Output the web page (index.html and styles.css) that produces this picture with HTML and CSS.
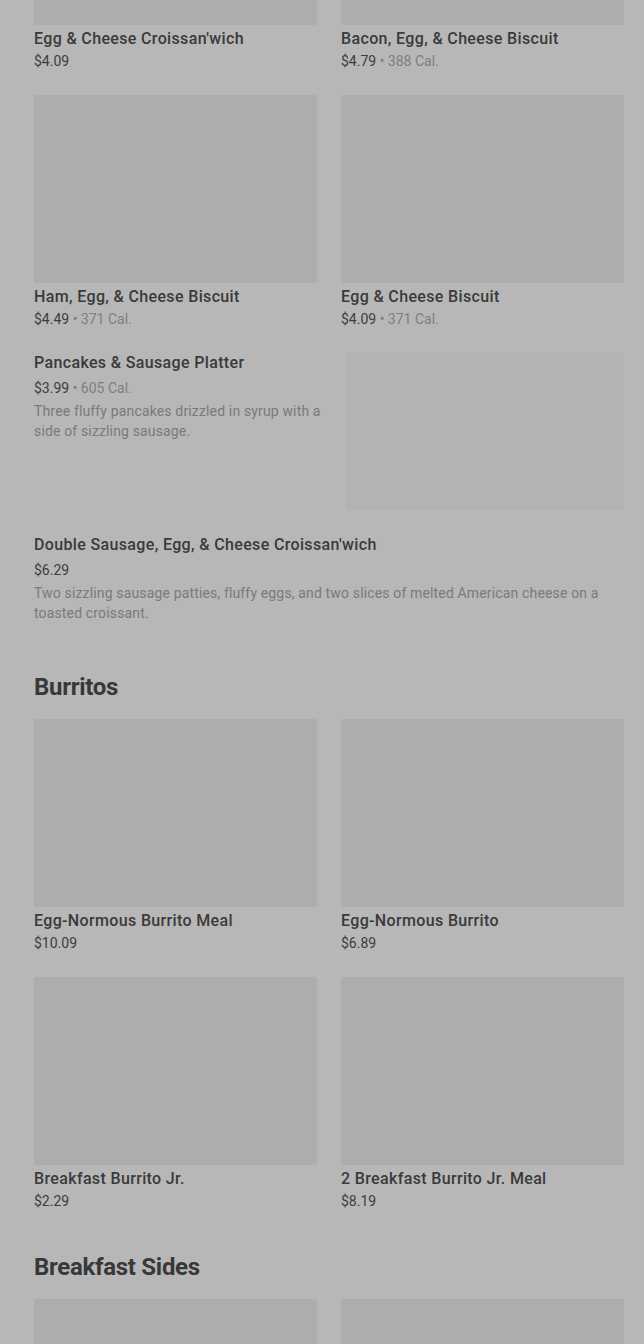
FILE: index.html
```html
<!DOCTYPE html>
<html lang="en">

<head>
  <meta charset="UTF-8">
  <meta name="viewport" content="width=device-width, initial-scale=1.0">
  <title>Breakfast menu</title>
  <link rel="stylesheet" href="styles.css">
</head>

<body>
  <main class="menu">
    <section class="section">
      <div class="grid">
        <div class="item">
          <div class="thumb"></div>
          <h3 class="name">Egg &amp; Cheese Croissan'wich</h3>
          <p class="price">$4.09</p>
        </div>
        <div class="item">
          <div class="thumb"></div>
          <h3 class="name">Bacon, Egg, &amp; Cheese Biscuit</h3>
          <p class="price">$4.79 <span class="cal">• 388 Cal.</span></p>
        </div>
        <div class="item">
          <div class="thumb"></div>
          <h3 class="name">Ham, Egg, &amp; Cheese Biscuit</h3>
          <p class="price">$4.49 <span class="cal">• 371 Cal.</span></p>
        </div>
        <div class="item">
          <div class="thumb"></div>
          <h3 class="name">Egg &amp; Cheese Biscuit</h3>
          <p class="price">$4.09 <span class="cal">• 371 Cal.</span></p>
        </div>
      </div>

      <div class="list">
        <div class="row">
          <div class="info">
            <h3 class="name">Pancakes &amp; Sausage Platter</h3>
            <p class="price">$3.99 <span class="cal">• 605 Cal.</span></p>
            <p class="desc">Three fluffy pancakes drizzled in syrup with a side of sizzling sausage.</p>
          </div>
          <div class="photo"></div>
        </div>
        <div class="row">
          <div class="info">
            <h3 class="name">Double Sausage, Egg, &amp; Cheese Croissan'wich</h3>
            <p class="price">$6.29</p>
            <p class="desc">Two sizzling sausage patties, fluffy eggs, and two slices of melted American cheese on a toasted croissant.</p>
          </div>
        </div>
      </div>
    </section>

    <section class="section">
      <h2 class="title">Burritos</h2>
      <div class="grid">
        <div class="item">
          <div class="thumb"></div>
          <h3 class="name">Egg-Normous Burrito Meal</h3>
          <p class="price">$10.09</p>
        </div>
        <div class="item">
          <div class="thumb"></div>
          <h3 class="name">Egg-Normous Burrito</h3>
          <p class="price">$6.89</p>
        </div>
        <div class="item">
          <div class="thumb"></div>
          <h3 class="name">Breakfast Burrito Jr.</h3>
          <p class="price">$2.29</p>
        </div>
        <div class="item">
          <div class="thumb"></div>
          <h3 class="name">2 Breakfast Burrito Jr. Meal</h3>
          <p class="price">$8.19</p>
        </div>
      </div>
    </section>

    <section class="section">
      <h2 class="title">Breakfast Sides</h2>
      <div class="grid">
        <div class="item">
          <div class="thumb"></div>
        </div>
        <div class="item">
          <div class="thumb"></div>
        </div>
      </div>
    </section>
  </main>
</body>

</html>
```

FILE: styles.css
```css
html,
body {
  margin: 0;
  background: #b7b7b7;
}

body {
  font-family: Roboto, "Liberation Sans", sans-serif;
  color: #3a3a3a;
}

.menu {
  margin-top: -163px;
  padding: 0 20px 0 34px;
}

.section {
  padding-bottom: 40px;
}

.title {
  margin: 0 0 16px;
  font-size: 24px;
  line-height: 32px;
  font-weight: 700;
  letter-spacing: -0.3px;
  color: #383838;
}

.grid {
  display: grid;
  grid-template-columns: 1fr 1fr;
  gap: 24px;
}

.thumb {
  height: 188px;
  background: #adadad;
  border-radius: 2px;
}

.name {
  margin: 2px 0 0;
  font-size: 16px;
  line-height: 24px;
  font-weight: 500;
  letter-spacing: 0.35px;
}

.price {
  margin: 0;
  font-size: 14px;
  line-height: 20px;
  color: #3d3d3d;
}

.cal {
  color: #7e7e7e;
}

.list {
  display: flex;
  flex-direction: column;
  gap: 23px;
  margin-top: 22px;
  padding-bottom: 8px;
}

.row {
  display: flex;
  gap: 24px;
  align-items: flex-start;
}

.info {
  flex: 1;
}

.info .name {
  margin: 0;
}

.info .price {
  margin-top: 3px;
}

.desc {
  margin: 3px 0 0;
  font-size: 14px;
  line-height: 20px;
  letter-spacing: 0.15px;
  color: #7a7a7a;
}

.photo {
  flex: 0 0 278px;
  height: 158px;
  margin-top: 1px;
  background: #b3b3b3;
  border-radius: 2px;
}
```
